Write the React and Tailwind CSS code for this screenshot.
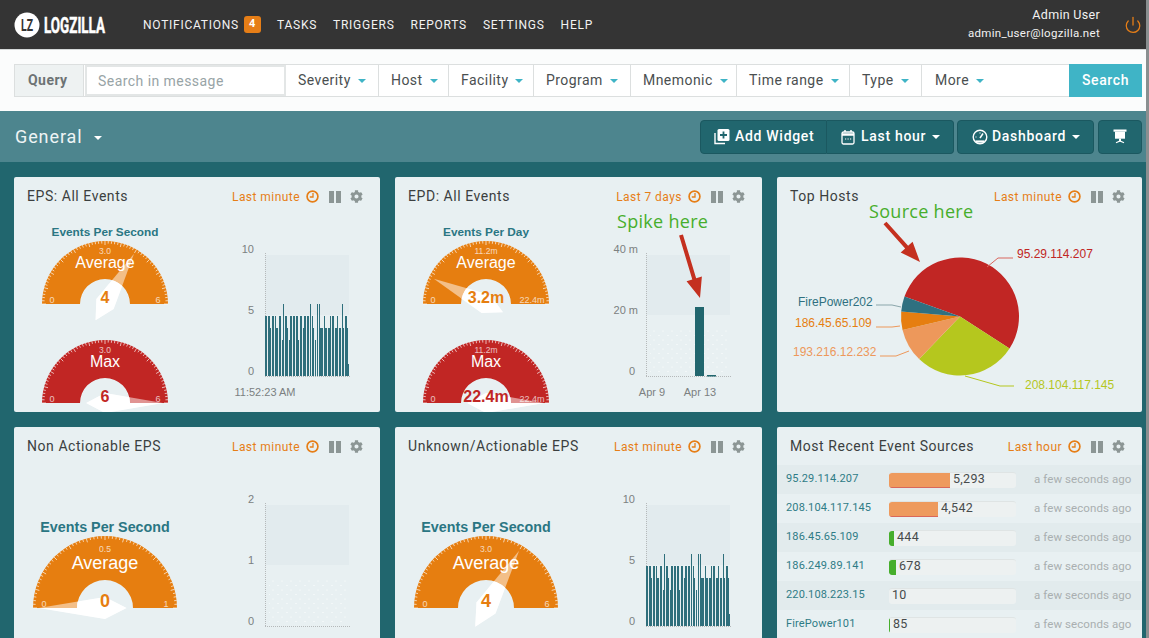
import React from 'react';
import { Power } from 'lucide-react';
import { FaCog } from 'react-icons/fa';

const navItems = ['Tasks', 'Triggers', 'Reports', 'Settings', 'Help'];
const filters = [
  ['Severity', 'w-[93px]'],
  ['Host', 'w-[70px]'],
  ['Facility', 'w-[85px]'],
  ['Program', 'w-[97px]'],
  ['Mnemonic', 'w-[106px]'],
  ['Time range', 'w-[113px]'],
  ['Type', 'w-[72px]'],
];

// bar segments read off the EPS chart: [from, to, value]
const epsBars = [
  [0, 2, 5], [3, 5, 5], [5, 6, 4], [7, 9, 5], [10, 11, 5], [11, 13, 4], [14, 16, 5], [17, 18, 3], [18, 19, 6], [20, 21, 5],
  [21, 22, 5], [22, 23, 4], [24, 25, 3], [25, 27, 5], [28, 30, 5], [31, 33, 5], [33, 34, 3], [35, 37, 5], [38, 39, 4], [39, 41, 5],
  [42, 44, 5], [45, 46, 6], [47, 48, 5], [48, 49, 4], [50, 51, 3], [52, 53, 6], [54, 55, 6], [55, 56, 4], [56, 58, 4], [59, 60, 5],
  [60, 62, 4], [63, 65, 4], [65, 66, 5], [67, 69, 5], [70, 72, 4], [72, 73, 5], [74, 76, 4], [77, 78, 6], [78, 79, 4], [80, 81, 5],
  [81, 82, 5], [82, 83, 4], [83, 84, 1],
];

function Caret({ className }) {
  return <span className={`inline-block w-0 h-0 border-x-[4px] border-x-transparent border-t-[4px] ${className}`} />;
}

function ClockIcon() {
  return (
    <svg width="13" height="13" viewBox="0 0 13 13" fill="none" stroke="#e67e17">
      <circle cx="6.5" cy="6.5" r="5.4" strokeWidth="1.7" />
      <path d="M7 3v4H3.8" strokeWidth="1.3" />
    </svg>
  );
}

function PauseIcon() {
  return (
    <span className="flex gap-[2px]">
      <span className="w-[5px] h-[12px] bg-[#8c9695]" />
      <span className="w-[5px] h-[12px] bg-[#8c9695]" />
    </span>
  );
}

function WidgetHeader({ title, range }) {
  return (
    <div className="flex items-center h-[38px] pl-[13px] pr-[17px] pt-[1px]">
      <span className="text-[14px] tracking-[0.55px] text-[#3b3f40]">{title}</span>
      <span className="ml-auto text-[12px] tracking-[0.45px] text-[#e67e17]">{range}</span>
      <span className="ml-[6px] mr-[1px]"><ClockIcon /></span>
      <span className="ml-[9px]"><PauseIcon /></span>
      <FaCog className="ml-[9px] text-[13px] text-[#8c9695]" />
    </div>
  );
}

function Gauge({ id, R, r, color, label, value, max, mid, maxLabel, valueSize = 16, labelSize = 16, big = false }) {
  const c = R + 2;
  const base = R + 2;
  const a = Math.PI * (value / max);
  const dx = -Math.cos(a);
  const dy = -Math.sin(a);
  const L = R * 0.92;
  const T = R * 0.3;
  const w = big ? 11 : 10;
  const pts = [
    [c + dx * L, base + dy * L],
    [c - dy * w, base + dx * w],
    [c - dx * T, base - dy * T],
    [c + dy * w, base - dx * w],
  ].map((p) => p.join(',')).join(' ');
  const ticks = [];
  for (let i = 0; i <= 60; i++) {
    const t = (Math.PI * i) / 60;
    const len = i % 5 === 0 ? 4 : 2.5;
    ticks.push(
      <line
        key={i}
        x1={c - Math.cos(t) * R}
        y1={base - Math.sin(t) * R}
        x2={c - Math.cos(t) * (R - len)}
        y2={base - Math.sin(t) * (R - len)}
        stroke="#fff"
        strokeWidth="0.8"
        opacity="0.85"
      />
    );
  }
  return (
    <svg width={2 * R + 4} height={R + 24} className="block overflow-visible font-['Liberation_Sans',sans-serif]">
      <defs>
        <clipPath id={id}>
          <circle cx={c} cy={base} r={r} />
          <rect x="0" y={base} width={2 * R + 4} height="40" />
        </clipPath>
      </defs>
      <path
        d={`M${c - R} ${base}A${R} ${R} 0 0 1 ${c + R} ${base}L${c + r} ${base}A${r} ${r} 0 0 0 ${c - r} ${base}Z`}
        fill={color}
      />
      {ticks}
      <text x={c} y={base - (big ? 56 : 50)} textAnchor="middle" fontSize="8.5" fill="#fff" opacity="0.7">{mid}</text>
      <text x={c} y={base - (big ? 39 : 36)} textAnchor="middle" fontSize={labelSize} fill="#fff">{label}</text>
      <text x={c - (big ? 61 : 53)} y={base - 1} textAnchor="middle" fontSize="9" fill="#fff" opacity="0.7">0</text>
      <text x={c + (maxLabel.length > 1 ? 46 : big ? 61 : 53)} y={base - 1} textAnchor="middle" fontSize="9" fill="#fff" opacity="0.7">{maxLabel}</text>
      <polygon points={pts} fill="#fff" opacity="0.5" />
      <polygon points={pts} fill="#fff" clipPath={`url(#${id})`} />
      <text x={c} y={base - 1} textAnchor="middle" fontSize={valueSize} fontWeight="700" fill={color}>{value === 22.4 ? '22.4m' : value === 3.2 ? '3.2m' : value}</text>
    </svg>
  );
}

function BarChart({ id, labels, bars, xLabels, dots }) {
  // plot area runs 39..123 wide, 16..137 high inside this svg
  return (
    <svg width="140" height="170" className="block overflow-visible font-['Liberation_Sans',sans-serif]">
      <defs>
        <pattern id={id} width="9" height="9" patternUnits="userSpaceOnUse">
          <circle cx="2" cy="2" r="0.6" fill="#fff" />
          <circle cx="7" cy="6.5" r="0.6" fill="#fff" />
        </pattern>
      </defs>
      <rect x="39" y="16" width="84" height="60" fill="#e2ebee" />
      {dots && <rect x="43" y="88" width="78" height="46" fill={`url(#${id})`} />}
      <line x1="39.5" y1="14" x2="39.5" y2="138" stroke="#b5b9ba" strokeDasharray="1 1" />
      <line x1="39" y1="137.5" x2="125" y2="137.5" stroke="#b5b9ba" strokeDasharray="1 1" />
      {labels.map(([text, end, y]) => (
        <text key={text} x={end} y={y} textAnchor="end" fontSize="11" fill="#7b8081">{text}</text>
      ))}
      {bars}
      {xLabels.map(([text, x]) => (
        <text key={text} x={x} y="157" textAnchor="middle" fontSize="11" fill="#7b8081">{text}</text>
      ))}
    </svg>
  );
}

function EpsBars() {
  return epsBars.map(([from, to, v], i) => (
    <rect key={i} x={39 + from} y={137 - v * 12} width={to - from} height={v * 12} fill="#2f6f7c" shapeRendering="crispEdges" />
  ));
}

function RedArrow({ className, width, height, x1, y1, x2, y2 }) {
  // shaft and head are worked out from the two ends
  const len = Math.hypot(x2 - x1, y2 - y1);
  const ux = (x2 - x1) / len;
  const uy = (y2 - y1) / len;
  const bx = x2 - ux * 20;
  const by = y2 - uy * 20;
  const pts = [
    [x1 + uy * 2, y1 - ux * 2],
    [bx + uy * 2, by - ux * 2],
    [bx + uy * 8, by - ux * 8],
    [x2, y2],
    [bx - uy * 8, by + ux * 8],
    [bx - uy * 2, by + ux * 2],
    [x1 - uy * 2, y1 + ux * 2],
  ].map((p) => p.join(',')).join(' ');
  return (
    <svg width={width} height={height} className={`absolute ${className}`}>
      <polygon points={pts} fill="#c4301f" />
    </svg>
  );
}

function GaugeCell({ title, big, children }) {
  return (
    <div className="w-[182px] shrink-0 flex flex-col items-center">
      <div className={big ? "font-['Liberation_Sans',sans-serif] font-bold text-[14.3px] leading-[18px] text-[#2a7683] mt-[53px] mb-[-2px]" : "font-['Liberation_Sans',sans-serif] font-bold text-[11.8px] leading-[16px] text-[#2a7683] mt-[9px] mb-[-1px]"}>
        {title}
      </div>
      {children}
    </div>
  );
}

function TopHosts() {
  const cx = 183;
  const cy = 101.5;
  const R = 59;
  const at = (x, y) => {
    const n = Math.hypot(x, y);
    return `${cx + (x / n) * R} ${cy + (y / n) * R}`;
  };
  const slice = (a, b, large, fill) => (
    <path d={`M${cx} ${cy}L${at(a[0], a[1])}A${R} ${R} 0 ${large} 1 ${at(b[0], b[1])}Z`} fill={fill} />
  );
  const v = [[-167, -60], [147, 95], [-120, 125], [-170, 40], [-178, -15]];
  return (
    <svg width="365" height="197" className="block font-['Liberation_Sans',sans-serif]">
      {slice(v[0], v[1], 1, '#c12624')}
      {slice(v[1], v[2], 0, '#b5c71e')}
      {slice(v[2], v[3], 0, '#ed985b')}
      {slice(v[3], v[4], 0, '#e67e10')}
      {slice(v[4], v[0], 0, '#2f7080')}
      <path d="M210 52l11-9h15" fill="none" stroke="#d9675f" />
      <path d="M99 90h16l9 2" fill="none" stroke="#8aa6ab" />
      <path d="M99 112h16l8-1" fill="none" stroke="#ed985b" />
      <path d="M103 141h16l13-5" fill="none" stroke="#ed985b" />
      <path d="M188 161l35 10h14" fill="none" stroke="#b5c71e" />
      <text x="240" y="43" fontSize="12" fill="#c12624">95.29.114.207</text>
      <text x="21" y="91" fontSize="12" fill="#2f7080">FirePower202</text>
      <text x="18" y="112" fontSize="12" fill="#e67e10">186.45.65.109</text>
      <text x="16" y="141" fontSize="12" fill="#ed985b">193.216.12.232</text>
      <text x="248" y="174" fontSize="12" fill="#b5c71e">208.104.117.145</text>
    </svg>
  );
}

const sources = [
  ['95.29.114.207', '5,293', 'w-[61px]', 'bg-[#ee9a5d] border-b border-[#d9675a]', 'bg-[#e2ebed]'],
  ['208.104.117.145', '4,542', 'w-[49px]', 'bg-[#ee9a5d] border-b border-[#d9675a]', 'bg-[#e8f0f2]'],
  ['186.45.65.109', '444', 'w-[5px]', 'bg-[#46ae2c]', 'bg-[#e2ebed]'],
  ['186.249.89.141', '678', 'w-[7px]', 'bg-[#46ae2c]', 'bg-[#e8f0f2]'],
  ['220.108.223.15', '10', 'w-0', 'bg-[#46ae2c]', 'bg-[#e2ebed]'],
  ['FirePower101', '85', 'w-[1px]', 'bg-[#46ae2c]', 'bg-[#e8f0f2]'],
];

function SourcesTable() {
  return (
    <div>
      {sources.map(([host, count, width, fill, rowBg]) => (
        <div key={host} className={`flex items-center h-[29px] ${rowBg}`}>
          <span className="w-[112px] pl-[9px] shrink-0 text-[11px] tracking-[0.15px] text-[#2f7c86]">{host}</span>
          <div className="w-[127px] h-[16px] shrink-0 flex items-stretch rounded-[3px] bg-[#edf1f1] border-t border-[#dfe4e4] overflow-hidden">
            <span className={`${width} ${fill} rounded-l-[2px]`} />
            <span className="pl-[3px] text-[12.5px] leading-[11px] tracking-[0.3px] text-[#474b4c]">{count}</span>
          </div>
          <span className="ml-[18px] text-[11.5px] tracking-[0.08px] text-[#a9afb0] whitespace-nowrap">a few seconds ago</span>
        </div>
      ))}
    </div>
  );
}

export default function App() {
  return (
    <div className="relative w-full h-[638px] overflow-hidden bg-[#21666e] font-[Roboto,sans-serif]">
      {/* Top nav */}
      <nav className="flex items-center h-[50px] bg-[#343434] border-b border-[#d5d8d8] pl-[14px] pr-[7px]">
        <svg width="130" height="26" className="shrink-0">
          <circle cx="13" cy="13" r="12.5" fill="#fff" />
          <text x="7" y="19" fontSize="16" fontWeight="700" fill="#343434" textLength="12" lengthAdjust="spacingAndGlyphs" fontFamily="Roboto">LZ</text>
          <text x="30" y="21" fontSize="22" fontWeight="700" fill="#fff" stroke="#fff" strokeWidth="0.5" textLength="61" lengthAdjust="spacingAndGlyphs" fontFamily="Roboto">LOGZILLA</text>
        </svg>
        <div className="ml-[-1px] flex items-center text-[12px] tracking-[0.75px] uppercase text-[#f2f2f2]">
          <span>Notifications</span>
          <span className="ml-[5px] w-[17px] h-[17px] rounded-[3px] bg-[#e67e17] flex items-center justify-center text-white font-bold text-[11px]">4</span>
          {navItems.map((item) => (
            <span key={item} className="ml-[16px]">{item}</span>
          ))}
        </div>
        <div className="ml-auto text-right text-[#f2f2f2] tracking-[0.3px]">
          <div className="text-[12.5px] leading-[16px]">Admin User</div>
          <div className="text-[11.5px] leading-[18px] mt-[1px]">admin_user@logzilla.net</div>
        </div>
        <Power className="ml-[24px] w-[18px] h-[18px] text-[#e67e17]" strokeWidth={1.7} />
      </nav>

      {/* Query bar */}
      <div className="h-[61px] bg-[#fbfcfc] pl-[14px] pr-[7px] pt-[14px]">
        <div className="flex h-[33px] bg-white border-y border-[#dcdfdf] text-[14px] tracking-[0.45px] text-[#4a4f50]">
          <div className="w-[70px] shrink-0 flex items-center pl-[13px] bg-[#eef2f2] border-x border-[#dcdfdf] font-bold text-[#6d7374]">Query</div>
          <div className="w-[201px] shrink-0 ml-[1px] flex items-center pl-[11px] pt-[1px] border-2 border-[#e3e6e6] text-[#98a4a6]">Search in message</div>
          {filters.map(([name, width]) => (
            <div key={name} className={`${width} shrink-0 flex items-center pl-[12px] border-r border-[#dcdfdf]`}>
              {name}
              <Caret className="ml-[7px] border-t-[#3fb4c6]" />
            </div>
          ))}
          <div className="flex items-center pl-[13px]">
            More
            <Caret className="ml-[7px] border-t-[#3fb4c6]" />
          </div>
          <div className="ml-auto w-[73px] -my-[1px] flex items-center justify-center bg-[#3fb4c6] text-white font-medium tracking-[0.6px]">Search</div>
        </div>
      </div>

      {/* Dashboard title bar */}
      <div className="flex items-center h-[51px] bg-[#4d858e] pl-[15px] pr-[7px] text-white">
        <span className="text-[18px] tracking-[0.9px] text-[#eef4f5]">General</span>
        <Caret className="ml-[11px] mt-[3px] border-t-white" />
        <div className="ml-auto flex h-[34px] text-[14px] font-medium tracking-[0.7px]">
          <div className="w-[127px] flex items-center pl-[13px] bg-[#21666e] border border-[#1b5860] rounded-l-[4px]">
            <svg width="16" height="17" viewBox="0 0 16 17" fill="none">
              <path d="M1 5v10.5h10" stroke="#fff" strokeWidth="1.4" />
              <rect x="3.5" y="1" width="12" height="12" rx="1.5" fill="#fff" />
              <path d="M9.5 3.5v7M6 7h7" stroke="#21666e" strokeWidth="1.8" />
            </svg>
            <span className="ml-[5px]">Add Widget</span>
          </div>
          <div className="w-[127px] flex items-center pl-[14px] bg-[#21666e] border border-l-0 border-[#1b5860] rounded-r-[4px]">
            <svg width="14" height="16" viewBox="0 0 14 16" fill="none" stroke="#fff">
              <rect x="1" y="3" width="12" height="12" rx="1.5" strokeWidth="1.3" />
              <path d="M1 5.5h12" strokeWidth="2.5" />
              <path d="M4 1v2M10 1v2" strokeWidth="1.5" />
              <path d="M4 10h1.2M6.5 10h1.2M9 10h1.2" strokeWidth="1.2" />
            </svg>
            <span className="ml-[6px]">Last hour</span>
            <Caret className="ml-[6px] border-t-white" />
          </div>
          <div className="ml-[3px] w-[137px] flex items-center pl-[14px] bg-[#21666e] border border-[#1b5860] rounded-[4px]">
            <svg width="16" height="16" viewBox="0 0 16 16" fill="none" stroke="#fff">
              <circle cx="8" cy="8" r="6.8" strokeWidth="1.4" />
              <path d="M8 9l3-4.5" strokeWidth="1.5" />
              <path d="M3.5 12.5h9" strokeWidth="2.2" />
              <path d="M3.5 8h1M8 3.5v1" strokeWidth="1.2" />
            </svg>
            <span className="ml-[4px]">Dashboard</span>
            <Caret className="ml-[6px] border-t-white" />
          </div>
          <div className="ml-[4px] w-[44px] flex items-center justify-center bg-[#21666e] border border-[#1b5860] rounded-[4px]">
            <svg width="14" height="15" viewBox="0 0 14 15" fill="#fff">
              <rect x="0.5" y="0.5" width="13" height="2.2" />
              <rect x="2" y="2.7" width="10" height="7" />
              <rect x="6" y="9.5" width="2" height="3" />
              <path d="M3 13.8L7 12l4 1.8" fill="none" stroke="#fff" strokeWidth="1.2" />
            </svg>
          </div>
        </div>
      </div>

      {/* Widgets */}
      <div className="grid grid-cols-[366px_367px_365px] grid-rows-[235px_235px] gap-[15px] pl-[14px] pt-[15px]">
        <section className="bg-[#e8f0f2] rounded-[2px] overflow-hidden">
          <WidgetHeader title="EPS: All Events" range="Last minute" />
          <div className="flex">
            <GaugeCell title="Events Per Second">
              <Gauge id="g1" R={63} r={25} color="#e67e10" label="Average" value={4} max={6} mid="3.0" maxLabel="6" />
              <div className="mt-[12px]">
                <Gauge id="g2" R={63} r={25} color="#c12624" label="Max" value={6} max={6} mid="3.0" maxLabel="6" />
              </div>
            </GaugeCell>
            <div className="ml-[30px] mt-[24px]">
              <BarChart
                id="c1"
                labels={[['10', 28, 14], ['5', 28, 75], ['0', 28, 136]]}
                bars={<EpsBars />}
                xLabels={[['11:52:23 AM', 39]]}
              />
            </div>
          </div>
        </section>

        <section className="relative bg-[#e8f0f2] rounded-[2px] overflow-hidden">
          <WidgetHeader title="EPD: All Events" range="Last 7 days" />
          <div className="flex">
            <GaugeCell title="Events Per Day">
              <Gauge id="g3" R={63} r={25} color="#e67e10" label="Average" value={3.2} max={22.4} mid="11.2m" maxLabel="22.4m" />
              <div className="mt-[12px]">
                <Gauge id="g4" R={63} r={25} color="#c12624" label="Max" value={22.4} max={22.4} mid="11.2m" maxLabel="22.4m" />
              </div>
            </GaugeCell>
            <div className="ml-[30px] mt-[24px]">
              <BarChart
                id="c2"
                labels={[['40 m', 31, 14], ['20 m', 31, 75], ['0', 28, 136]]}
                bars={
                  <>
                    <rect x="88" y="68" width="9" height="69" fill="#21666e" />
                    <rect x="100" y="136" width="9" height="1.5" fill="#21666e" />
                  </>
                }
                xLabels={[['Apr 9', 45], ['Apr 13', 93]]}
                dots
              />
            </div>
          </div>
          <span className="absolute left-[222px] top-[31px] font-['Open_Sans',sans-serif] text-[18px] leading-[26px] tracking-[0.3px] text-[#46ae2c]">Spike here</span>
          <RedArrow className="left-[270px] top-[50px]" width="50" height="80" x1={16} y1={8} x2={35} y2={71} />
        </section>

        <section className="relative bg-[#e8f0f2] rounded-[2px] overflow-hidden">
          <WidgetHeader title="Top Hosts" range="Last minute" />
          <TopHosts />
          <span className="absolute left-[92px] top-[21px] font-['Open_Sans',sans-serif] text-[18px] leading-[26px] tracking-[0.3px] text-[#46ae2c]">Source here</span>
          <RedArrow className="left-[100px] top-[40px]" width="50" height="50" x1={8} y1={6} x2={43} y2={45} />
        </section>

        <section className="bg-[#e8f0f2] rounded-[2px] overflow-hidden">
          <WidgetHeader title="Non Actionable EPS" range="Last minute" />
          <div className="flex">
            <GaugeCell title="Events Per Second" big>
              <Gauge id="g5" big R={72} r={28} color="#e67e10" label="Average" labelSize={18} valueSize={18} value={0} max={1} mid="0.5" maxLabel="1" />
            </GaugeCell>
            <div className="ml-[30px] mt-[24px]">
              <BarChart id="c3" labels={[['2', 28, 14], ['1', 28, 75], ['0', 28, 136]]} xLabels={[]} dots />
            </div>
          </div>
        </section>

        <section className="bg-[#e8f0f2] rounded-[2px] overflow-hidden">
          <WidgetHeader title="Unknown/Actionable EPS" range="Last minute" />
          <div className="flex">
            <GaugeCell title="Events Per Second" big>
              <Gauge id="g6" big R={72} r={28} color="#e67e10" label="Average" labelSize={18} valueSize={18} value={4} max={6} mid="3.0" maxLabel="6" />
            </GaugeCell>
            <div className="ml-[30px] mt-[24px]">
              <BarChart id="c4" labels={[['10', 28, 14], ['5', 28, 75], ['0', 28, 136]]} bars={<EpsBars />} xLabels={[]} />
            </div>
          </div>
        </section>

        <section className="bg-[#e8f0f2] rounded-[2px] overflow-hidden">
          <WidgetHeader title="Most Recent Event Sources" range="Last hour" />
          <SourcesTable />
        </section>
      </div>

      {/* scrollbar sliver on the right edge */}
      <div className="absolute right-0 top-0 bottom-0 w-[3px] bg-[#8a8f90]" />
    </div>
  );
}
